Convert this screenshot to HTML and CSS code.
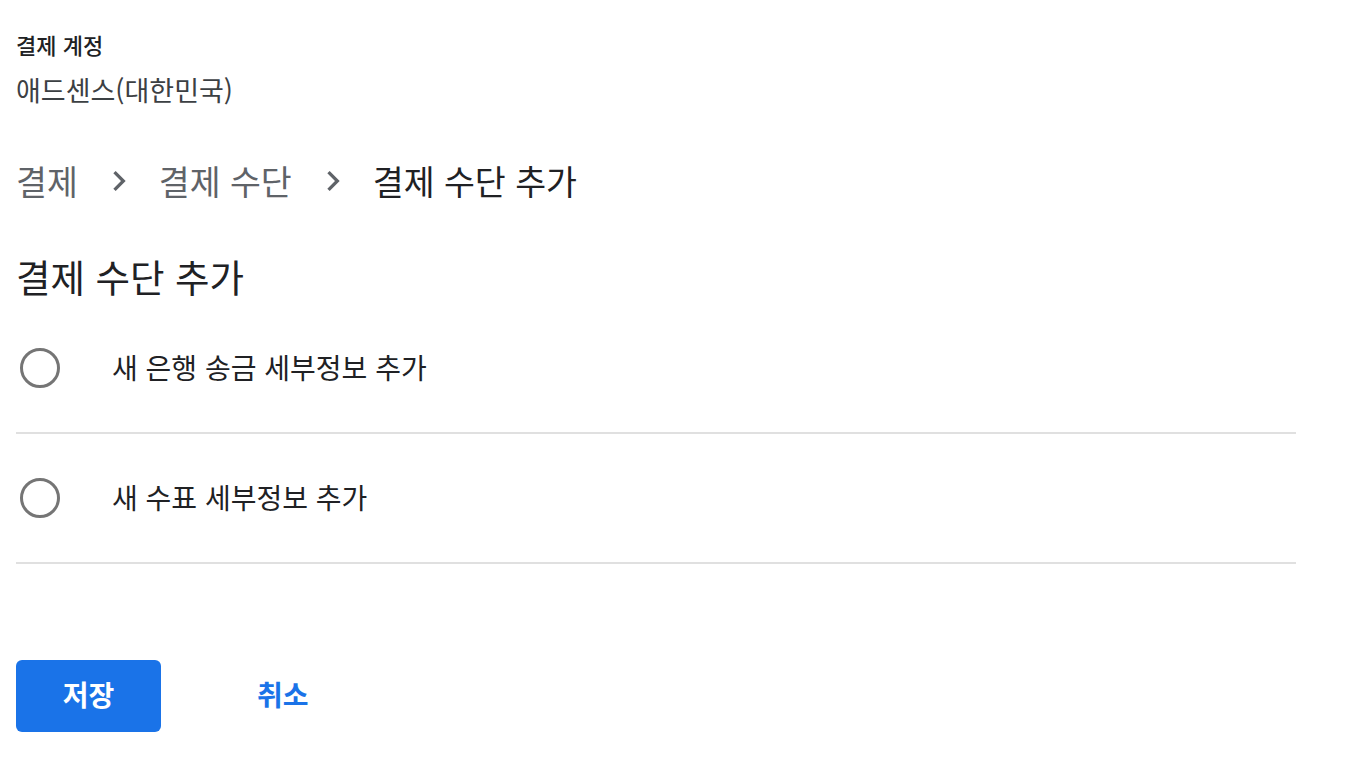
FILE: index.html
```html
<!DOCTYPE html>
<html lang="ko">
<head>
<meta charset="utf-8">
<link rel="stylesheet" href="styles.css">
</head>
<body>
<div class="page">
  <div class="account">
    <div class="account-label">결제 계정</div>
    <div class="account-name">애드센스(대한민국)</div>
  </div>
  <nav class="crumbs">
    <span class="crumb">결제</span>
    <svg class="chev" viewBox="0 0 24 24"><path d="M8.6 16.6 13.2 12 8.6 7.4 10 6l6 6-6 6z"/></svg>
    <span class="crumb">결제 수단</span>
    <svg class="chev" viewBox="0 0 24 24"><path d="M8.6 16.6 13.2 12 8.6 7.4 10 6l6 6-6 6z"/></svg>
    <span class="crumb current">결제 수단 추가</span>
  </nav>
  <h1 class="title">결제 수단 추가</h1>
  <div class="options">
    <label class="option">
      <span class="radio"></span>
      <span class="option-text">새 은행 송금 세부정보 추가</span>
    </label>
    <label class="option">
      <span class="radio"></span>
      <span class="option-text">새 수표 세부정보 추가</span>
    </label>
  </div>
  <div class="actions">
    <button class="btn-primary">저장</button>
    <button class="btn-text">취소</button>
  </div>
</div>
</body>
</html>
```

FILE: styles.css
```css
html, body {
  margin: 0;
  padding: 0;
  background: #fff;
}
body {
  font-family: "Noto Sans CJK KR", "Noto Sans", sans-serif;
  color: #202124;
}
.page {
  width: 1280px;
  padding: 28px 16px 0 16px;
}
.account-label {
  font-size: 22px;
  font-weight: 500;
  line-height: 32px;
  color: #202124;
}
.account-name {
  font-size: 27px;
  line-height: 36px;
  margin-top: 12px;
  color: #3c4043;
}
.crumbs {
  display: flex;
  align-items: center;
  margin-top: 49px;
  height: 48px;
}
.crumb {
  font-size: 33.6px;
  line-height: 48px;
  color: #5f6368;
}
.crumb.current {
  color: #202124;
}
.chev {
  width: 40px;
  height: 40px;
  fill: #5f6368;
  margin: 0 20px 0 21px;
  flex: none;
}
.title {
  font-size: 37.5px;
  font-weight: 400;
  line-height: 48px;
  margin: 47px 0 0 0;
  color: #202124;
}
.options {
  margin-top: 4px;
}
.option {
  display: flex;
  align-items: center;
  height: 128px;
  border-bottom: 2px solid #e0e0e0;
}
.radio {
  box-sizing: border-box;
  width: 40px;
  height: 40px;
  border: 3.5px solid #757575;
  border-radius: 50%;
  margin-left: 4px;
  flex: none;
}
.option-text {
  font-size: 28px;
  margin-left: 52px;
  padding-bottom: 3px;
  color: #202124;
}
.actions {
  display: flex;
  align-items: center;
  margin-top: 96px;
}
.btn-primary {
  width: 145px;
  height: 72px;
  border: none;
  border-radius: 6px;
  background: #1a73e8;
  color: #fff;
  font-family: inherit;
  font-size: 28px;
  font-weight: 700;
  padding: 0 0 5px 0;
}
.btn-text {
  border: none;
  background: none;
  color: #1a73e8;
  font-family: inherit;
  font-size: 28px;
  font-weight: 700;
  margin-left: 96px;
  padding: 0 0 5px 0;
}
```
